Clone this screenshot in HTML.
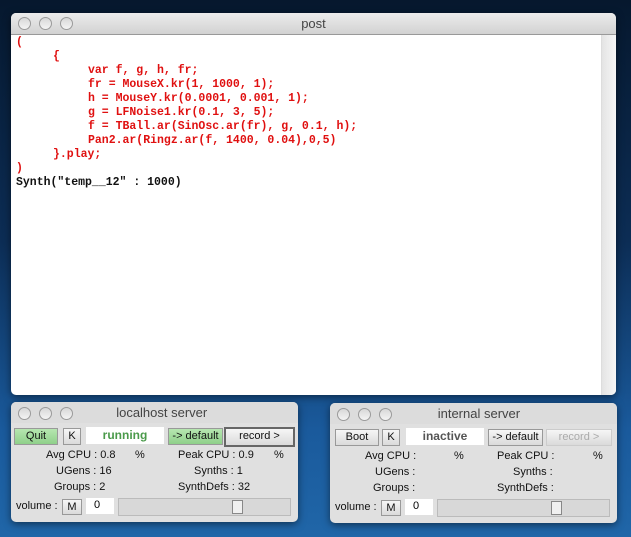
<!DOCTYPE html>
<html><head><style>
body{margin:0;width:631px;height:537px;overflow:hidden;position:relative;
background:linear-gradient(180deg,#06182e 0%,#0c2d55 45%,#1a5a9c 80%,#2066a8 100%);font-family:"Liberation Sans",sans-serif;}
.win{position:absolute;background:#e0e0e0;border-radius:5px;overflow:hidden;box-shadow:0 2px 8px rgba(0,0,0,.5);}
.tb{position:absolute;left:0;right:0;top:0;background:linear-gradient(#ececec,#d2d2d2);border-bottom:1px solid #999;text-align:center;color:#444;}
.dot{position:absolute;width:11px;height:11px;border-radius:50%;border:1px solid #9a9a9a;background:linear-gradient(#d8d8d8,#f4f4f4);}
.code{position:absolute;left:5px;top:23px;font-family:"Liberation Mono",monospace;font-weight:bold;font-size:11.5px;line-height:14px;color:#e01010;}
.code div{height:14px;white-space:pre}
.i1{padding-left:37px}.i2{padding-left:72px}
.a{position:absolute;font-size:11px;color:#111;}
.btn{position:absolute;height:15px;border:1px solid #999;background:linear-gradient(#f6f6f6,#dadada);font-size:11px;text-align:center;line-height:15px;color:#111;}
.g{background:linear-gradient(#b6e6b0,#8fd08a);}
.fld{position:absolute;background:#fff;text-align:center;font-weight:bold;font-size:12px;line-height:17px;}
</style></head><body>
<div class="win" style="left:11px;top:13px;width:605px;height:382px;background:#fff">
 <div class="tb" style="height:21px;font-size:13px;line-height:21px">post
  <div class="dot" style="left:7px;top:4px"></div><div class="dot" style="left:28px;top:4px"></div><div class="dot" style="left:49px;top:4px"></div></div>
 <div style="position:absolute;left:590px;top:22px;width:15px;height:360px;background:linear-gradient(90deg,#e4e4e4,#f8f8f8);border-left:1px solid #ddd"></div>
 <div class="code"><div>(</div><div class="i1">{</div><div class="i2">var f, g, h, fr;</div><div class="i2">fr = MouseX.kr(1, 1000, 1);</div><div class="i2">h = MouseY.kr(0.0001, 0.001, 1);</div><div class="i2">g = LFNoise1.kr(0.1, 3, 5);</div><div class="i2">f = TBall.ar(SinOsc.ar(fr), g, 0.1, h);</div><div class="i2">Pan2.ar(Ringz.ar(f, 1400, 0.04),0,5)</div><div class="i1">}.play;</div><div>)</div><div style="color:#111">Synth("temp__12" : 1000)</div></div>
</div>

<div class="win" style="left:11px;top:402px;width:287px;height:120px">
 <div class="tb" style="height:21px;border:none;background:#dcdcdc;font-size:13px;line-height:22px;">&nbsp;&nbsp;&nbsp;&nbsp;localhost server
  <div class="dot" style="left:7px;top:5px"></div><div class="dot" style="left:28px;top:5px"></div><div class="dot" style="left:49px;top:5px"></div></div>
 <div class="btn g" style="left:3px;top:26px;width:42px">Quit</div>
 <div class="btn" style="left:52px;top:26px;width:16px">K</div>
 <div class="fld" style="left:75px;top:25px;width:78px;color:#4a9a4a">running</div>
 <div class="btn g" style="left:157px;top:26px;width:53px">-&gt; default</div>
 <div class="btn" style="left:213px;top:25px;width:67px;border:2px solid #666;height:16px">record &gt;</div>
 <div class="a" style="left:35px;top:47px">Avg CPU : 0.8</div><div class="a" style="left:124px;top:47px">%</div>
 <div class="a" style="left:167px;top:47px">Peak CPU : 0.9</div><div class="a" style="left:263px;top:47px">%</div>
 <div class="a" style="left:45px;top:63px">UGens : 16</div><div class="a" style="left:183px;top:63px">Synths : 1</div>
 <div class="a" style="left:43px;top:79px">Groups : 2</div><div class="a" style="left:167px;top:79px">SynthDefs : 32</div>
 <div class="a" style="left:5px;top:98px">volume :</div>
 <div class="btn" style="left:51px;top:97px;width:18px;height:14px;line-height:14px">M</div>
 <div class="fld" style="left:75px;top:96px;width:28px;font-weight:normal;font-size:11px;line-height:14px;height:16px;text-align:left;padding-left:8px;box-sizing:border-box">0</div>
 <div style="position:absolute;left:107px;top:96px;width:171px;height:16px;border:1px solid #bbb;background:#d8d8d8"></div>
 <div style="position:absolute;left:221px;top:98px;width:9px;height:12px;border:1px solid #888;background:#f0f0f0"></div>
</div>

<div class="win" style="left:330px;top:403px;width:287px;height:120px">
 <div class="tb" style="height:21px;border:none;background:#dcdcdc;font-size:13px;line-height:22px;">&nbsp;&nbsp;&nbsp;internal server
  <div class="dot" style="left:7px;top:5px"></div><div class="dot" style="left:28px;top:5px"></div><div class="dot" style="left:49px;top:5px"></div></div>
 <div class="btn" style="left:5px;top:26px;width:42px">Boot</div>
 <div class="btn" style="left:52px;top:26px;width:16px">K</div>
 <div class="fld" style="left:76px;top:25px;width:78px;color:#555">inactive</div>
 <div class="btn" style="left:158px;top:26px;width:53px">-&gt; default</div>
 <div class="btn" style="left:216px;top:26px;width:64px;color:#aaa;border-color:#ccc">record &gt;</div>
 <div class="a" style="left:35px;top:47px">Avg CPU :</div><div class="a" style="left:124px;top:47px">%</div>
 <div class="a" style="left:167px;top:47px">Peak CPU :</div><div class="a" style="left:263px;top:47px">%</div>
 <div class="a" style="left:45px;top:63px">UGens :</div><div class="a" style="left:183px;top:63px">Synths :</div>
 <div class="a" style="left:43px;top:79px">Groups :</div><div class="a" style="left:167px;top:79px">SynthDefs :</div>
 <div class="a" style="left:5px;top:98px">volume :</div>
 <div class="btn" style="left:51px;top:97px;width:18px;height:14px;line-height:14px">M</div>
 <div class="fld" style="left:75px;top:96px;width:28px;font-weight:normal;font-size:11px;line-height:14px;height:16px;text-align:left;padding-left:8px;box-sizing:border-box">0</div>
 <div style="position:absolute;left:107px;top:96px;width:171px;height:16px;border:1px solid #bbb;background:#d8d8d8"></div>
 <div style="position:absolute;left:221px;top:98px;width:9px;height:12px;border:1px solid #888;background:#f0f0f0"></div>
</div>
</body></html>
